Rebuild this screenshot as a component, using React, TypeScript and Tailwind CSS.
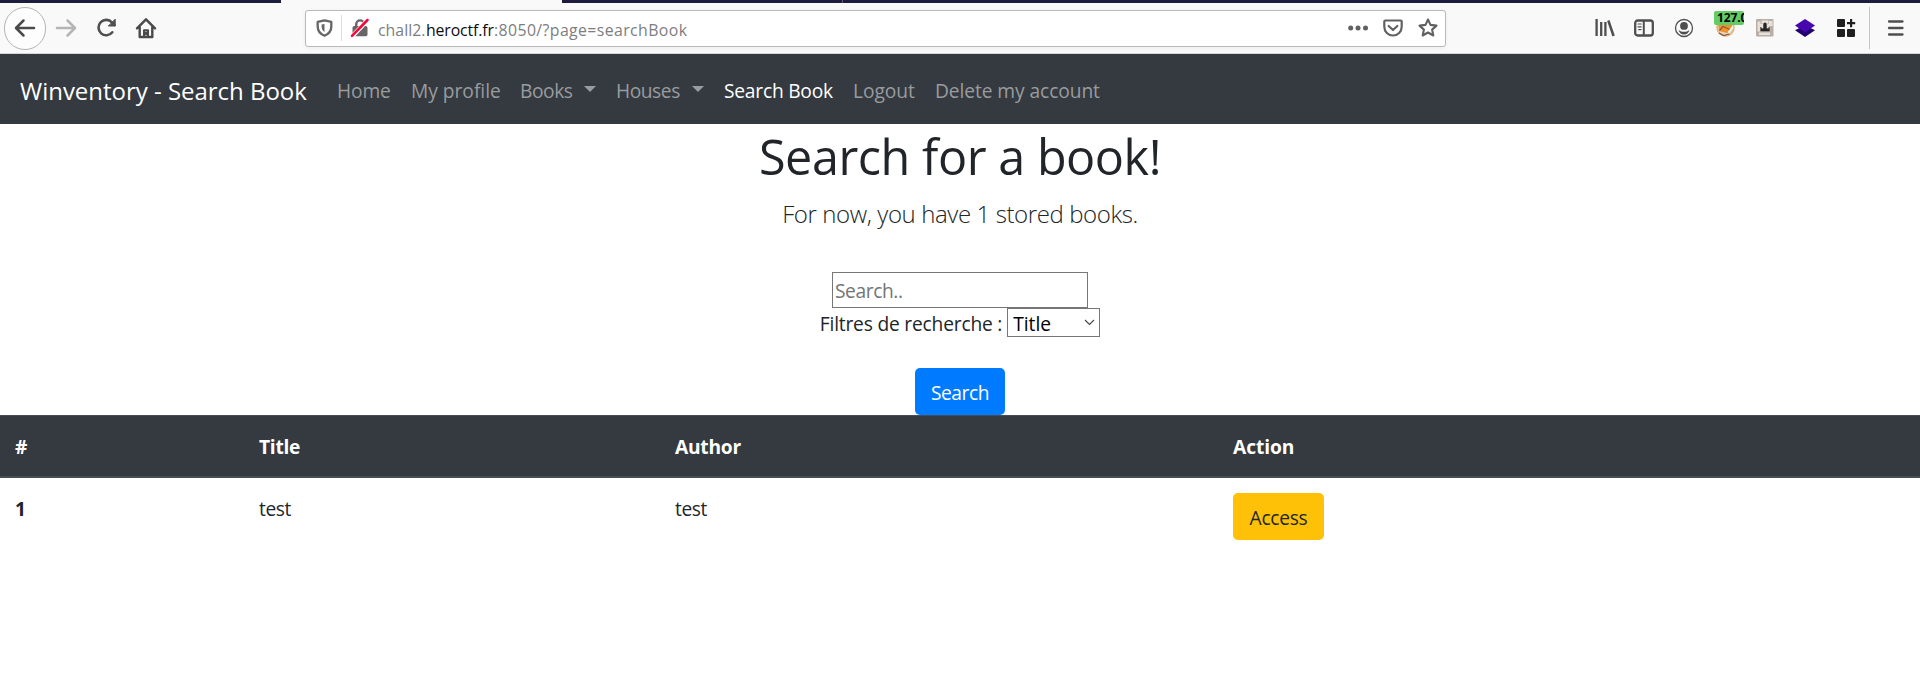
import React from 'react';

const iconBase = {
  fill: 'none',
  stroke: 'currentColor',
  strokeLinecap: 'round' as const,
  strokeLinejoin: 'round' as const,
};

function Toolbar() {
  return (
    <div className="flex h-[54px] flex-col border-b border-[#d6d6da] bg-[#f9f9fa]">
      <div className="flex h-[3px] shrink-0 bg-[#1c1c3c]">
        <div className="w-[281px]" />
        <div className="w-[281px] bg-[#f9f9fa]" />
        <div className="w-[281px] border-r border-[#5b5b78]" />
      </div>
      <div className="flex h-[50px] items-center">
        <div className="ml-1 flex h-[43px] w-[42px] shrink-0 items-center justify-center rounded-full border border-[#b4b4b6] bg-[#fdfdfd] text-[#4a4a4a]">
          <svg width="22" height="20" viewBox="0 0 22 20" strokeWidth="2.5" {...iconBase}>
            <path d="M20 10H2.500M9.500 2.500L2 10l7.500 7.500" />
          </svg>
        </div>
        <svg className="ml-[9px] shrink-0 text-[#b5b5b6]" width="22" height="20" viewBox="0 0 22 20" strokeWidth="2.5" {...iconBase}>
          <path d="M2 10h17.500M12.500 2.500L20 10l-7.500 7.500" />
        </svg>
        <svg className="ml-[18px] shrink-0 text-[#4f4f4f]" width="24" height="22" viewBox="0 0 24 22" strokeWidth="2.6" {...iconBase}>
          <path d="M17.300 15.300A7.700 7.700 0 1 1 17 5.500l2.600 2.600" />
          <path d="M20.200 2.500V9h-6.500z" fill="currentColor" strokeWidth="1" />
        </svg>
        <svg className="ml-4 shrink-0 text-[#4a4a4a]" width="22" height="22" viewBox="0 0 22 22" strokeWidth="2.4" {...iconBase}>
          <path d="M2 11.300L11 2.300l9 9M4.700 10v10h12.600V10" />
          <path d="M9 19v-5.800h4V19M11 15.500v2" strokeWidth="2" />
        </svg>
        <div className="ml-[148px] flex h-[37px] w-[1141px] shrink-0 items-center rounded-[3px] border border-[#b9b9bb] bg-white shadow-[0_1px_4px_rgba(0,0,0,0.06)]">
          <svg className="ml-[10px] text-[#666666]" width="17" height="18" viewBox="0 0 17 18" strokeWidth="2.3" {...iconBase}>
            <path d="M8.500 1.300l6.800 1.500v5c0 4-2.500 7.200-6.800 8.900-4.300-1.700-6.800-4.900-6.800-8.900v-5z" />
            <path d="M8.500 5v8C6.300 11.500 5.600 9.800 5.600 7.500V5.600z" fill="currentColor" stroke="none" />
          </svg>
          <div className="ml-[8px] h-[26px] w-px bg-[#dcdcdd]" />
          <svg className="ml-[8px]" width="20" height="20" viewBox="0 0 20 20">
            <path d="M6.200 9V6.300a3.900 3.900 0 0 1 7.800 0V9" fill="none" stroke="#666" strokeWidth="2.400" />
            <rect x="2.500" y="8" width="15" height="10.300" rx="1.800" fill="#666" />
            <path d="M2 18.500L18 1.800" stroke="#fff" strokeWidth="4.500" />
            <path d="M2 17.800L17.500 2" stroke="#ff0039" strokeWidth="2.500" strokeLinecap="round" />
          </svg>
          <div className="ml-[8px] flex pt-[3px] text-[15.840px] leading-[20px] whitespace-pre text-[#7d7d7f]">
            <span className="w-[48px] tracking-[0.030px]">chall2.</span>
            <span className="w-[68px] tracking-[-0.124px] text-[#0c0c0d]">heroctf.fr</span>
            <span className="tracking-[0.400px]">:8050/?page=searchBook</span>
          </div>
          <div className="mr-[7px] ml-auto flex items-center text-[#616161]">
            <svg width="20" height="6" viewBox="0 0 20 6" fill="currentColor">
              <circle cx="2.700" cy="3" r="2.500" />
              <circle cx="10" cy="3" r="2.500" />
              <circle cx="17.500" cy="3" r="2.500" />
            </svg>
            <svg className="ml-[15px]" width="20" height="18" viewBox="0 0 20 18" strokeWidth="2.200" {...iconBase}>
              <path d="M2.300 1.500h15.400c.6 0 1 .4 1 1v5.300a8.700 8.700 0 0 1-17.400 0V2.500c0-.6.4-1 1-1z" />
              <path d="M5.700 7l4.300 4 4.300-4" />
            </svg>
            <svg className="ml-[15px]" width="20" height="20" viewBox="0 0 20 20" strokeWidth="2.100" {...iconBase}>
              <path d="M10 1.500l2.500 5.400 6 .7-4.400 4 1.200 5.900-5.300-3-5.300 3 1.200-5.900-4.400-4 6-.7z" />
            </svg>
          </div>
        </div>
        <div className="ml-auto flex h-full items-center text-[#4f4f4f]">
          <svg className="w-[20px]" height="18" viewBox="0 0 20 18" strokeWidth="2.300" fill="none" stroke="currentColor">
            <path d="M1.600 0v17M6.200 3v14M10.400 3v14" />
            <path d="M13.300 1.500l5.300 15.500" strokeWidth="2.500" />
          </svg>
          <svg className="ml-[19px]" width="20" height="18" viewBox="0 0 20 18" strokeWidth="2.300" {...iconBase}>
            <rect x="1.200" y="1.500" width="17.600" height="15" rx="2.500" />
            <path d="M9.800 2v14" strokeWidth="2" />
            <path d="M4 5h3.200M4 7.800h3.200M4.700 10.600H7" strokeWidth="1.200" />
          </svg>
          <svg className="ml-[20px]" width="20" height="20" viewBox="0 0 20 20">
            <circle cx="10" cy="10" r="8.500" fill="none" stroke="currentColor" strokeWidth="1.300" />
            <circle cx="10" cy="7.900" r="3.900" fill="currentColor" />
            <path d="M4.600 12c1.500 1.300 3.300 1.800 5.400 1.800s3.900-.5 5.400-1.800c-.4 2.700-2.500 4.600-5.400 4.600S5 14.700 4.600 12z" fill="currentColor" />
          </svg>
          <div className="relative ml-[21px] h-[20px] w-[30px]">
            <svg width="22" height="20" viewBox="0 0 22 20">
              <circle cx="10.500" cy="9.500" r="9.300" fill="#efb077" />
              <circle cx="10.500" cy="9.500" r="7.700" fill="#ddd5c8" />
              <path d="M3 3.500l6 2.300 8-3v8l-4.500 4.200-8.500-2z" fill="#f0902d" />
              <path d="M4.500 12.500l3.500-4 7.500 3.300M4 15l4.500 2.500 6-1.500" fill="none" stroke="#8a5a32" strokeWidth="1.200" />
              <path d="M13.500 14.500l4.500-6" stroke="#fff" strokeWidth="1.800" />
            </svg>
            <div className="absolute top-[-7px] left-[-1px] flex h-[14px] w-[30px] items-center overflow-hidden rounded-[2px] bg-[#63cc65] pl-[3px] font-['Open_Sans',sans-serif] text-[12px] leading-none font-bold tracking-[-0.100px] text-[#050505]">
              127.0
            </div>
          </div>
          <svg className="ml-[11px]" width="18" height="18" viewBox="0 0 18 18">
            <rect width="17.500" height="17.500" rx="1" fill="#b8aea5" />
            <path d="M1.500 2.500h3v10h-3zM13 2h3.500v5H13zM3 13.500h11v2.500H3zM5.500 1.500h7v3h-7zM4.500 5h2.500v4H4.500zM11.200 5h2v4h-2z" fill="#e8e1d9" />
            <path d="M7.400 5.200a1.600 1.600 0 0 1 3.200 0V9.500h2V8h1v4.200H4.400V8h1v1.500h2z" fill="#252525" />
          </svg>
          <svg className="ml-[20px]" width="22" height="20" viewBox="0 0 22 20">
            <path d="M1 12.300l10-5 10 5-10 6.700z" fill="#23006f" />
            <path d="M1 7.600L11 1l10 6.600-10 6.900z" fill="#4607ae" />
          </svg>
          <svg className="ml-[20px]" width="20" height="20" viewBox="0 0 20 20" fill="#202020">
            <rect x="1" y="1" width="8" height="8" rx="1" />
            <rect x="1" y="11" width="8" height="8" rx="1" />
            <rect x="11" y="11" width="8" height="8" rx="1" />
            <path d="M14 1h2.200v3h3v2.200h-3v3H14v-3h-3V4h3z" />
          </svg>
          <div className="ml-[13px] h-[42px] w-px bg-[#c4c4c6]" />
          <svg className="mr-[15px] ml-[17px]" width="18" height="18" viewBox="0 0 18 18" strokeWidth="2.300" {...iconBase}>
            <path d="M2 2.500h13.500M2 9h13.500M2 15.500h13.500" />
          </svg>
        </div>
      </div>
    </div>
  );
}

function Caret() {
  return (
    <svg className="mt-[10px] ml-auto" width="12" height="6" viewBox="0 0 12 6" fill="currentColor">
      <path d="M0 0h12L6 6z" />
    </svg>
  );
}

function Navbar() {
  return (
    <nav className="flex h-[70px] items-center bg-[#343a40] pt-[4px] pl-5 whitespace-nowrap text-[#999c9f]">
      <a className="w-[317px] text-[24px] tracking-[-0.020px] text-white">Winventory - Search Book</a>
      <a className="w-[74px] tracking-[-0.151px]">Home</a>
      <a className="w-[109px] tracking-[-0.013px]">My profile</a>
      <a className="mr-[20px] flex w-[76px] tracking-[-0.450px]">Books<Caret /></a>
      <a className="mr-[19px] flex w-[88px] tracking-[-0.450px]">Houses<Caret /></a>
      <a className="ml-px w-[129px] tracking-[-0.222px] text-white">Search Book</a>
      <a className="w-[82px] tracking-[-0.040px]">Logout</a>
      <a className="tracking-[-0.080px]">Delete my account</a>
    </nav>
  );
}

export default function App() {
  return (
    <div className="h-[683px] overflow-hidden bg-white font-['Open_Sans',sans-serif] text-[19.200px] leading-[30px] text-[#212529]">
      <Toolbar />
      <Navbar />
      <main>
        <div className="flex flex-col items-center">
          <h1 className="pt-px text-[48.500px] leading-[63px] tracking-[-0.440px]">Search for a book!</h1>
          <p className="text-[24px] leading-[51px] font-light tracking-[-0.397px]">For now, you have 1 stored books.</p>
          <input
            type="text"
            placeholder="Search.."
            className="mt-[33px] h-[36px] w-[256px] border border-[#767676] px-[2px] pt-px tracking-[-0.400px] placeholder:text-[#757575]"
          />
          <div className="flex h-[29px] items-center">
            <label className="mr-[5px] pt-[2px] tracking-[-0.190px]">Filtres de recherche :</label>
            <button className="flex h-[29px] w-[93px] items-center justify-between border border-[#767676] bg-white pr-[4px] pl-[5px] text-black">
              <span className="pt-[2px] tracking-[-0.024px]">Title</span>
              <svg width="11" height="7" viewBox="0 0 11 7" fill="none" stroke="#444" strokeWidth="1.100">
                <path d="M1 1l4.500 4.500L10 1" />
              </svg>
            </button>
          </div>
          <button className="mt-[31px] h-[47px] w-[90px] rounded-[5px] bg-[#007bff] pt-[2px] tracking-[-0.450px] text-white">
            Search
          </button>
        </div>
        <table className="w-full table-fixed border-collapse text-left">
          <colgroup>
            <col className="w-[244px]" />
            <col className="w-[416px]" />
            <col className="w-[558px]" />
            <col />
          </colgroup>
          <thead>
            <tr className="h-[61px] border-t border-b-2 border-[#454d55] bg-[#343a40] text-white">
              <th className="px-[15px] pt-[2px] tracking-[-0.288px]">#</th>
              <th className="px-[15px] pt-[2px] tracking-[-0.288px]">Title</th>
              <th className="px-[15px] pt-[2px] tracking-[-0.250px]">Author</th>
              <th className="px-[15px] pt-[2px] tracking-[-0.100px]">Action</th>
            </tr>
          </thead>
          <tbody>
            <tr className="align-top">
              <th className="px-[15px] pt-[16px]">1</th>
              <td className="px-[15px] pt-[16px] tracking-[-0.400px]">test</td>
              <td className="px-[15px] pt-[16px] tracking-[-0.400px]">test</td>
              <td className="px-[15px] pt-[15px]">
                <button className="block h-[47px] w-[91px] rounded-[5px] bg-[#ffc107] pt-[3px] tracking-[-0.287px]">Access</button>
              </td>
            </tr>
          </tbody>
        </table>
      </main>
    </div>
  );
}
